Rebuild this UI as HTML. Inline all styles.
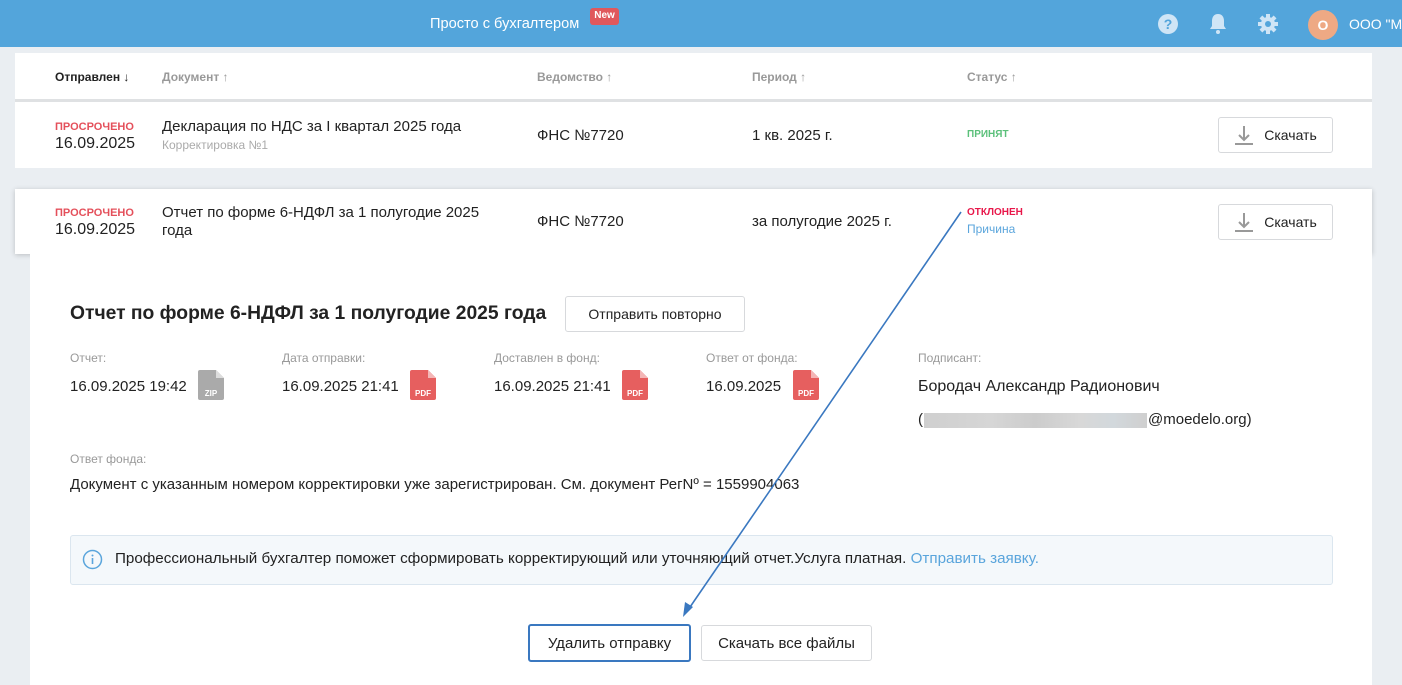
<!DOCTYPE html>
<html><head><meta charset="utf-8"><style>
*{box-sizing:border-box;margin:0;padding:0}
body{width:1402px;height:685px;overflow:hidden;background:#eaeef2;font-family:"Liberation Sans",sans-serif;color:#222;position:relative}
.a{position:absolute;white-space:nowrap}
.hdr{position:absolute;left:0;top:0;width:1402px;height:47px;background:#53a5db}
.card{position:absolute;background:#fff}
.th{font-size:12px;font-weight:bold;color:#999;top:70px}
.red{color:#e4505b;font-size:11px;font-weight:bold}
.date{font-size:16px;color:#222}
.t15{font-size:15px;color:#222}
.btn{position:absolute;border:1px solid #d7d9dc;border-radius:3px;background:#fff;font-size:14px;color:#222;display:flex;align-items:center;justify-content:center}
.lbl{font-size:12px;color:#999}
.val{font-size:15px;color:#222}
.fi{position:absolute;width:26px;height:30px}
</style></head><body>
<div class="hdr"></div>
<div class="a" style="left:430px;top:16px;font-size:14.6px;color:#fff">Просто с бухгалтером</div>
<div class="a" style="left:590px;top:8px;width:29px;height:17px;background:#e0585c;border-radius:3px;color:#fff;font-size:10px;font-weight:bold;text-align:center;line-height:16px">New</div>
<svg class="a" style="left:1157px;top:13px" width="22" height="22" viewBox="0 0 22 22"><circle cx="11" cy="11" r="10" fill="#cfe5f6"/><text x="11" y="16" font-size="14" font-weight="bold" fill="#53a5db" text-anchor="middle" font-family="Liberation Sans">?</text></svg>
<svg class="a" style="left:1209px;top:13px" width="18" height="22" viewBox="0 0 18 22"><path d="M9 1c-4 0-6 3-6 7v5l-2 3h16l-2-3V8c0-4-2-7-6-7z" fill="#cfe5f6"/><circle cx="9" cy="19" r="2" fill="#cfe5f6"/></svg>
<svg class="a" style="left:1257px;top:13px" width="22" height="22" viewBox="0 0 22 22"><g fill="#cfe5f6"><circle cx="11" cy="11" r="7"/><rect x="9" y="1" width="4" height="20"/><rect x="1" y="9" width="20" height="4"/><rect x="9" y="1" width="4" height="20" transform="rotate(45 11 11)"/><rect x="9" y="1" width="4" height="20" transform="rotate(-45 11 11)"/></g><circle cx="11" cy="11" r="3" fill="#53a5db"/></svg>
<div class="a" style="left:1308px;top:10px;width:30px;height:30px;border-radius:50%;background:#eea984;color:#fff;font-size:14px;font-weight:bold;text-align:center;line-height:30px">О</div>
<div class="a" style="left:1349px;top:16px;font-size:14px;color:#fff">ООО "М</div>

<div class="card" style="left:15px;top:53px;width:1357px;height:115px"></div>
<div class="a" style="left:15px;top:99px;width:1357px;height:3px;background:#dfe1e3"></div>
<div class="a th" style="left:55px;color:#222">Отправлен ↓</div>
<div class="a th" style="left:162px">Документ ↑</div>
<div class="a th" style="left:537px">Ведомство ↑</div>
<div class="a th" style="left:752px">Период ↑</div>
<div class="a th" style="left:967px">Статус ↑</div>

<div class="a red" style="left:55px;top:121px">ПРОСРОЧЕНО</div>
<div class="a date" style="left:55px;top:135px">16.09.2025</div>
<div class="a t15" style="left:162px;top:118px">Декларация по НДС за I квартал 2025 года</div>
<div class="a" style="left:162px;top:138px;font-size:12px;color:#aaa">Корректировка №1</div>
<div class="a t15" style="left:537px;top:127px">ФНС №7720</div>
<div class="a t15" style="left:752px;top:127px">1 кв. 2025 г.</div>
<div class="a" style="left:967px;top:129px;font-size:10px;font-weight:bold;color:#5bc07a">ПРИНЯТ</div>
<div class="btn" style="left:1218px;top:117px;width:115px;height:36px"><svg width="20" height="22" viewBox="0 0 20 22" style="margin-right:10px"><path d="M10 2v14M5 11l5 5 5-5" stroke="#999" stroke-width="2" fill="none"/><rect x="1" y="19" width="18" height="2" fill="#999"/></svg>Скачать</div>

<div class="card" style="left:15px;top:189px;width:1357px;height:65px;box-shadow:0 1px 5px rgba(0,0,0,.2)"></div>
<div class="card" style="left:30px;top:254px;width:1342px;height:431px"></div>
<div class="a red" style="left:55px;top:207px">ПРОСРОЧЕНО</div>
<div class="a date" style="left:55px;top:221px">16.09.2025</div>
<div class="a t15" style="left:162px;top:204px;line-height:18px">Отчет по форме 6-НДФЛ за 1 полугодие 2025<br>года</div>
<div class="a t15" style="left:537px;top:213px">ФНС №7720</div>
<div class="a t15" style="left:752px;top:213px">за полугодие 2025 г.</div>
<div class="a" style="left:967px;top:207px;font-size:10px;font-weight:bold;color:#e8174a">ОТКЛОНЕН</div>
<div class="a" style="left:967px;top:222px;font-size:12px;color:#5aa5dc">Причина</div>
<div class="btn" style="left:1218px;top:204px;width:115px;height:36px"><svg width="20" height="22" viewBox="0 0 20 22" style="margin-right:10px"><path d="M10 2v14M5 11l5 5 5-5" stroke="#999" stroke-width="2" fill="none"/><rect x="1" y="19" width="18" height="2" fill="#999"/></svg>Скачать</div>

<div class="a" style="left:70px;top:303px;font-size:19.3px;font-weight:bold">Отчет по форме 6-НДФЛ за 1 полугодие 2025 года</div>
<div class="btn" style="left:565px;top:296px;width:180px;height:36px">Отправить повторно</div>

<div class="a lbl" style="left:70px;top:351px">Отчет:</div>
<div class="a val" style="left:70px;top:378px">16.09.2025 19:42</div>
<svg class="fi" style="left:198px;top:370px" viewBox="0 0 26 30"><path d="M2 0h16l8 8v20a2 2 0 0 1-2 2H2a2 2 0 0 1-2-2V2a2 2 0 0 1 2-2z" fill="#aaa"/><path d="M18 0l8 8h-8z" fill="#ddd"/><text x="13" y="26" font-size="8" font-weight="bold" fill="#fff" text-anchor="middle" font-family="Liberation Sans">ZIP</text></svg>
<div class="a lbl" style="left:282px;top:351px">Дата отправки:</div>
<div class="a val" style="left:282px;top:378px">16.09.2025 21:41</div>
<svg class="fi" style="left:410px;top:370px" viewBox="0 0 26 30"><path d="M2 0h16l8 8v20a2 2 0 0 1-2 2H2a2 2 0 0 1-2-2V2a2 2 0 0 1 2-2z" fill="#e65f5f"/><path d="M18 0l8 8h-8z" fill="#f4b6b6"/><text x="13" y="26" font-size="8" font-weight="bold" fill="#fff" text-anchor="middle" font-family="Liberation Sans">PDF</text></svg>
<div class="a lbl" style="left:494px;top:351px">Доставлен в фонд:</div>
<div class="a val" style="left:494px;top:378px">16.09.2025 21:41</div>
<svg class="fi" style="left:622px;top:370px" viewBox="0 0 26 30"><path d="M2 0h16l8 8v20a2 2 0 0 1-2 2H2a2 2 0 0 1-2-2V2a2 2 0 0 1 2-2z" fill="#e65f5f"/><path d="M18 0l8 8h-8z" fill="#f4b6b6"/><text x="13" y="26" font-size="8" font-weight="bold" fill="#fff" text-anchor="middle" font-family="Liberation Sans">PDF</text></svg>
<div class="a lbl" style="left:706px;top:351px">Ответ от фонда:</div>
<div class="a val" style="left:706px;top:378px">16.09.2025</div>
<svg class="fi" style="left:793px;top:370px" viewBox="0 0 26 30"><path d="M2 0h16l8 8v20a2 2 0 0 1-2 2H2a2 2 0 0 1-2-2V2a2 2 0 0 1 2-2z" fill="#e65f5f"/><path d="M18 0l8 8h-8z" fill="#f4b6b6"/><text x="13" y="26" font-size="8" font-weight="bold" fill="#fff" text-anchor="middle" font-family="Liberation Sans">PDF</text></svg>
<div class="a lbl" style="left:918px;top:351px">Подписант:</div>
<div class="a val" style="left:918px;top:378px;font-size:16px">Бородач Александр Радионович</div>
<div class="a val" style="left:918px;top:411px">(</div>
<div class="a" style="left:924px;top:413px;width:223px;height:15px;background:linear-gradient(90deg,#cfcfcf,#d6d6d6 30%,#cccccc 50%,#d8d8d8 70%,#d2d8dc 85%,#cfcfcf)"></div>
<div class="a val" style="left:1148px;top:411px">@moedelo.org)</div>

<div class="a lbl" style="left:70px;top:452px">Ответ фонда:</div>
<div class="a val" style="left:70px;top:476px">Документ с указанным номером корректировки уже зарегистрирован. См. документ РегNº = 1559904063</div>

<div class="a" style="left:70px;top:535px;width:1263px;height:50px;background:#f4f8fb;border:1px solid #dbe6ef;border-radius:3px"></div>
<svg class="a" style="left:82px;top:549px" width="21" height="21" viewBox="0 0 21 21"><circle cx="10.5" cy="10.5" r="9" fill="none" stroke="#5aa5dc" stroke-width="1.5"/><rect x="9.7" y="9" width="1.6" height="6" fill="#5aa5dc"/><circle cx="10.5" cy="6.5" r="1" fill="#5aa5dc"/></svg>
<div class="a val" style="left:115px;top:550px;font-size:15.2px">Профессиональный бухгалтер поможет сформировать корректирующий или уточняющий отчет.Услуга платная. <span style="color:#5aa5dc">Отправить заявку.</span></div>

<div class="btn" style="left:528px;top:624px;width:163px;height:38px;border:2px solid #3a78c0;font-size:15px">Удалить отправку</div>
<div class="btn" style="left:701px;top:625px;width:171px;height:36px;font-size:15px">Скачать все файлы</div>

<svg class="a" style="left:0;top:0" width="1402" height="685"><line x1="961" y1="212" x2="688" y2="610" stroke="#3a78c0" stroke-width="1.6"/><path d="M683 617l2-15 8 5z" fill="#3a78c0"/></svg>
</body></html>
